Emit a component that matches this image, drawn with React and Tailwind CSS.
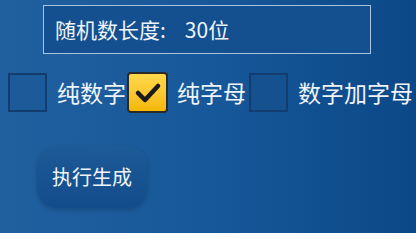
export default function App() {
  const font = { fontFamily: '"Noto Sans CJK SC", "Liberation Sans", sans-serif' };
  return (
    <div
      className="w-[416px] h-[233px] overflow-hidden bg-gradient-to-r from-[#21609f] via-[#17589a] to-[#0b4887] text-[#eef4fa]"
      style={font}
    >
      <div className="pl-[43px] pt-[5px]">
        <div className="w-[328px] h-[49px] border border-[#a9c4e0] bg-[#14508f] flex items-center pl-[11px] text-[21px] leading-none">
          <span>随机数长度:</span>
          <span className="ml-[19px]">30位</span>
        </div>
      </div>

      <div className="flex items-center mt-[18px] pl-[8px] text-[23px] leading-none">
        <div className="w-[39px] h-[39px] border-2 border-[#123d6e] bg-[#1c5a99]" />
        <span className="ml-[10px]">纯数字</span>
        <div className="ml-[1px] w-[41px] h-[41px] rounded-[4px] border-2 border-[#2a2a2a] bg-gradient-to-b from-[#ffd84a] to-[#f5b800] flex items-center justify-center">
          <svg width="28" height="24" viewBox="0 0 28 24">
            <path d="M4 12 L11 19 L24 5" fill="none" stroke="#1a1a1a" strokeWidth="4.5" strokeLinecap="round" strokeLinejoin="round" />
          </svg>
        </div>
        <span className="ml-[9px]">纯字母</span>
        <div className="ml-[3px] w-[39px] h-[39px] border-2 border-[#123d6e] bg-[#15508f]" />
        <span className="ml-[10px] whitespace-nowrap">数字加字母</span>
      </div>

      <div className="pl-[37px] mt-[33px]">
        <button className="w-[110px] h-[62px] rounded-[20px] bg-gradient-to-b from-[#1d5a98] to-[#134c8a] shadow-[0_2px_5px_rgba(0,0,0,0.2)] text-[20px] text-[#eef4fa] flex items-center justify-center">
          执行生成
        </button>
      </div>
    </div>
  );
}
